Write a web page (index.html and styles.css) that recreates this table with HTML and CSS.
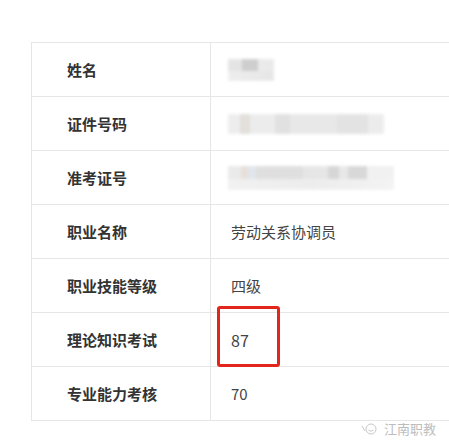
FILE: index.html
```html
<!DOCTYPE html>
<html>
<head>
    <title>成绩查询</title>
    <link rel="stylesheet" href="styles.css">
</head>
<body>
    <div class="page">
        <div class="result-table">
            <div class="row">
                <div class="label">姓名</div>
                <div class="value"><div class="mosaic mosaic-name"></div></div>
            </div>
            <div class="row">
                <div class="label">证件号码</div>
                <div class="value"><div class="mosaic mosaic-id"></div></div>
            </div>
            <div class="row">
                <div class="label">准考证号</div>
                <div class="value"><div class="mosaic mosaic-exam"></div></div>
            </div>
            <div class="row">
                <div class="label">职业名称</div>
                <div class="value">劳动关系协调员</div>
            </div>
            <div class="row">
                <div class="label">职业技能等级</div>
                <div class="value">四级</div>
            </div>
            <div class="row">
                <div class="label">理论知识考试</div>
                <div class="value highlight">87</div>
            </div>
            <div class="row">
                <div class="label">专业能力考核</div>
                <div class="value">70</div>
            </div>
        </div>

        <div class="watermark">
            <svg class="wm-icon" width="18" height="14" viewBox="0 0 18 14">
                <path d="M1 4 L4 9" stroke="#c8c8c8" stroke-width="1" fill="none"/>
                <circle cx="10" cy="7" r="5" stroke="#c8c8c8" stroke-width="1" fill="none"/>
                <path d="M7.5 8 Q10 10.5 12.5 8" stroke="#c8c8c8" stroke-width="1" fill="none"/>
            </svg>
            <span>江南职教</span>
        </div>
    </div>
</body>
</html>
```

FILE: styles.css
```css
body {
    margin: 0;
    background-color: #fff;
    font-family: "Noto Sans CJK SC", "Noto Sans", sans-serif;
    overflow: hidden;
}
.page {
    position: relative;
    width: 449px;
    height: 446px;
    padding: 42px 0 0 31px;
    box-sizing: border-box;
}
.result-table {
    width: 418px;
    border-top: 1px solid #e6e6e6;
    border-left: 1px solid #e6e6e6;
}
.row {
    display: grid;
    grid-template-columns: 179px 1fr;
    height: 53px;
    border-bottom: 1px solid #e6e6e6;
}
.label {
    display: flex;
    align-items: center;
    padding-left: 35px;
    border-right: 1px solid #e6e6e6;
    font-size: 15px;
    font-weight: bold;
    color: #333;
}
.value {
    display: flex;
    align-items: center;
    padding-left: 20px;
    font-size: 15px;
    color: #444;
}
.highlight {
    position: relative;
    font-size: 16px;
}
/* red marker drawn over the score cell */
.highlight::before {
    content: "";
    position: absolute;
    left: 6px;
    top: -7px;
    width: 63px;
    height: 61px;
    border: 3px solid #e2261c;
    border-radius: 3px;
    box-sizing: border-box;
}
.mosaic {
    filter: blur(1.5px);
    opacity: 0.9;
}
.mosaic-name {
    width: 46px;
    height: 22px;
    margin-left: -3px;
    background:
        linear-gradient(90deg, #e2e2e2 0 30%, #c9c9c9 30% 65%, #e8e8e8 65%) top / 100% 55% no-repeat,
        linear-gradient(90deg, #ececec, #e4e4e4) bottom / 100% 45% no-repeat;
}
.mosaic-id {
    width: 156px;
    height: 20px;
    margin-left: -3px;
    background:
        linear-gradient(90deg, #ececec 0 8%, #e0dcd6 8% 14%, #ebebeb 14% 30%, #dedede 30% 40%, #e6e6e6 40% 70%, #e0e0e0 70% 90%, #ebebeb 90%);
}
.mosaic-exam {
    width: 166px;
    height: 24px;
    margin-left: -3px;
    background:
        linear-gradient(90deg, #e8e8e8 0 8%, #e6dcd6 8% 12%, #dde4ea 12% 17%, #dcdcdc 17% 45%, #e4e4e4 45% 60%, #d2d2d2 60% 67%, #e6e6e6 67% 72%, #d4d4d4 72% 84%, #f0f0f0 84%) top / 100% 55% no-repeat,
        linear-gradient(90deg, #f0f0f0, #ebebeb 50%, #f2f2f2) bottom / 100% 45% no-repeat;
}
.watermark {
    position: absolute;
    right: 13px;
    bottom: 8px;
    display: flex;
    align-items: center;
    gap: 5px;
    font-size: 13px;
    color: #bdbdbd;
}
```
